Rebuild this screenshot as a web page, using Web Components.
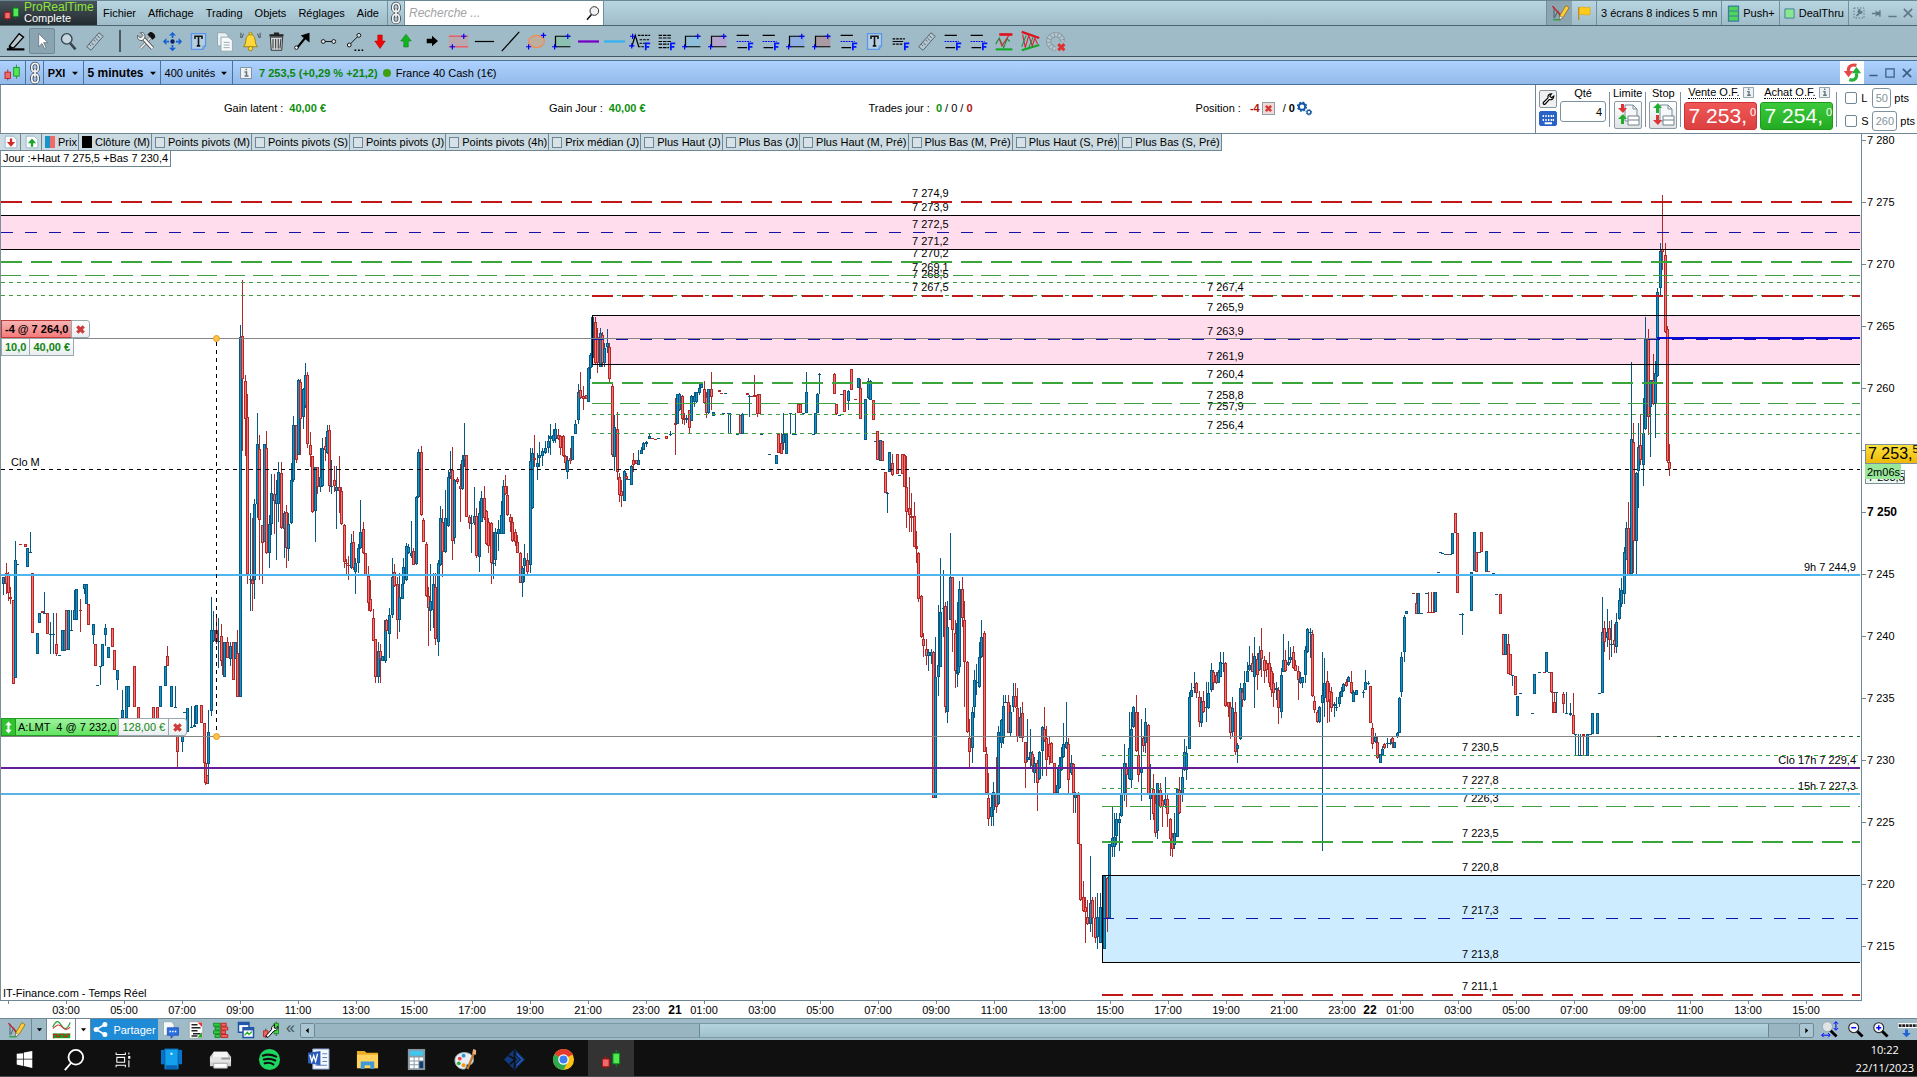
<!DOCTYPE html>
<html lang="fr">
<head>
<meta charset="utf-8">
<title>ProRealTime Complete</title>
<style>
html,body{margin:0;height:100%}
body{font:11px/14px "Liberation Sans",Arial,sans-serif;color:#000;background:#fff;overflow:hidden}
</style>
</head>
<body>
<trading-app></trading-app>
<script>
const define = (name, css, html, setup) => customElements.define(name, class extends HTMLElement {
  constructor() {
    super();
    this.attachShadow({mode: 'open'});
  }
  connectedCallback() {
    const body = typeof html === 'function' ? html(this) : html;
    this.shadowRoot.innerHTML = `<style>*{box-sizing:border-box}button{font:inherit;color:inherit;margin:0;padding:0;border:0;background:none;line-height:inherit}${css}</style>${body}`;
    if (setup) setup(this);
  }
});

/* ---------- icons, all on a 24 x 24 grid ---------- */
const plus = (x, y) => `<path d="M${x - 3} ${y}h6M${x} ${y - 3}v6" stroke="#00f" stroke-width="1.4"/>`;
const bigF = (x = 17, y = 13) => `<path d="M${x} ${y}v9M${x} ${y + 1}h5M${x} ${y + 5}h4" stroke="#0018ff" stroke-width="2" fill="none"/>`;
const linesF = `<path d="M3 5h14M4 19h11" stroke="#000" stroke-width="1.3"/><path d="M3 12h16" stroke="#00f" stroke-width="1.3" stroke-dasharray="2 1"/>${bigF()}`;
const rectPlus = c => `<path d="M4 6h17v12H4z" fill="${c}"/><path d="M4 18V6h17M4 18h17" stroke="#000" stroke-width="1.4" fill="none"/>${plus(18, 6)}${plus(3, 18)}`;
const ruler = `<path d="M3 18 17 2l5 4L8 22z" fill="#b4c6ce" stroke="#4b5a62"/><path d="m6 15 2 2m0-4 3 3m0-6 2 2m0-4 3 3m-1-6 3 3" stroke="#4b5a62" fill="none"/>`;
const textT = `<path d="M4 3h16v14l-3 4H4z" fill="#b5cfe0" stroke="#5b96ea" stroke-width="1.5"/><path d="M17 21v-4h3" fill="none" stroke="#5b96ea"/><path d="M8 9V6h8v3M12 6v11M10 17h4" stroke="#111" stroke-width="1.8" fill="none"/>`;
const pencilChart = `<path d="M4 4v15M2 3l13 14M5 18l4-9 3 8" stroke="#37474f" fill="none"/><path d="m2 3 12 13" stroke="#d11f2f" stroke-width="1.6"/><path d="M3 21h10" stroke="#1ba038" stroke-width="1.6"/><path d="m20 2 4 3-8 13-5 3 1-6z" fill="#ffcf3a" stroke="#8a6410"/><path d="m12 16 4 2-5 3z" fill="#fff" stroke="#555" stroke-width=".7"/>`;
const candles = `<path d="M6 8v14" stroke="#b11"/><rect x="2.5" y="11.5" width="7" height="8" fill="#ee6b6b" stroke="#b11"/><path d="M17 2v18" stroke="#0a8a1a"/><rect x="13.5" y="5.5" width="7" height="11" fill="#52e852" stroke="#0a8a1a"/>`;
const link = `<g fill="none" stroke="#3c454b" stroke-width="3.6"><rect x="8.5" y="1.5" width="7" height="9" rx="3.5"/><rect x="8.5" y="13.5" width="7" height="9" rx="3.5"/><path d="M12 7v10"/></g><g fill="none" stroke="#f4f4f4" stroke-width="1.8"><rect x="8.5" y="1.5" width="7" height="9" rx="3.5"/><rect x="8.5" y="13.5" width="7" height="9" rx="3.5"/><path d="M12 7v10"/></g>`;
const cross = `<path d="m5 5 14 14M19 5 5 19" stroke="#cf3b3b" stroke-width="7"/>`;
const mag = inner => `<path d="m14 14 8 8" stroke="#000" stroke-width="4"/><circle cx="9.5" cy="9.5" r="7" fill="#f3f6f8" stroke="#222" stroke-width="1.5"/>${inner}`;

const ICONS = {
  pen: `<path d="M1 21h20" stroke="#000" stroke-width="2.5"/><path d="M4 17 15 3l5 4L9 19l-5 1z" fill="#b9c9d0" stroke="#000" stroke-width="1.6"/><path d="m4 16 4 3-4 2z" fill="#000"/>`,
  cursor: `<path d="M8 3v16l4-4 3 6 2-1-3-6h5z" fill="#fff" stroke="#65727a"/>`,
  zoom: `<path d="m14 14 6 7" stroke="#37454d" stroke-width="3"/><circle cx="10" cy="9" r="6" fill="#c5d6de" stroke="#37454d" stroke-width="1.6"/>`,
  ruler, sep: `<path d="M12 0v24" stroke="#1b2327" stroke-width="1.4"/>`,
  tools: `<path d="m5 20 13-14" stroke="#777" stroke-width="3.4"/><path d="m5 20 13-14" stroke="#eee" stroke-width="1.6"/><path d="m7 7 12 13" stroke="#444" stroke-width="4.6"/><path d="m8 8 11 12" stroke="#f6f6f6" stroke-width="2.8"/><path d="m2 5 3 3 3-3-3-3c4-1 6 2 5 6L7 11C3 11 1 9 2 5z" fill="#f3f3f3" stroke="#444"/><path d="m13 4 3-3c4 0 6 3 6 6l-3 3z" fill="#111"/>`,
  move: `<circle cx="12" cy="12" r="2.5" fill="#0a1f66"/><path d="m12 1 4 4H8zM12 23l4-4H8zM1 12l4-4v8zM23 12l-4-4v8z" fill="#1262d6"/><path d="M11 5h2v3h-2zM11 16h2v3h-2zM5 11h3v2H5zM16 11h3v2h-3z" fill="#1262d6"/>`,
  text: textT,
  copy: `<path d="M4 2h9l3 3v12H4z" fill="#e9eff2" stroke="#8fa2ac"/><path d="M8 7h9l4 4v12H8z" fill="#f7f9fa" stroke="#8fa2ac"/><path d="M11 13h7m-7 3h7m-7 3h7" stroke="#8fa2ac"/>`,
  bell: `<path d="M4 18c3-3 2-6 3-9 1-4 3-5 5-5s4 1 5 5c1 3 0 6 3 9z" fill="#ffd83a" stroke="#9a7a08"/><circle cx="12" cy="20" r="2.5" fill="#ffd83a" stroke="#9a7a08"/><circle cx="12" cy="3" r="1.6" fill="#ffd83a" stroke="#9a7a08"/><path d="M4 3 2 8M1 2v6M20 3l2 5M23 2v6" stroke="#333" stroke-width=".9" fill="none"/>`,
  trash: `<path d="M5 7h14l-1 15H6z" fill="#d7dadc" stroke="#222"/><path d="M4 5h16M9 3h6" stroke="#222" stroke-width="2.4"/><path d="M8 9v11m3-11v11m3-11v11m3-11-1 11" stroke="#444" stroke-width="1.3"/>`,
  arrow: `<path d="M6 19 15 8" stroke="#000" stroke-width="2.4"/><path d="M20 2v11L10 5z"/><circle cx="5" cy="19" r="2" fill="#fff" stroke="#000"/>`,
  segment: `<path d="M6 12h12" stroke="#000"/><circle cx="6" cy="12" r="2.2" fill="#dfe8ec" stroke="#000"/><circle cx="18" cy="12" r="2.2" fill="#dfe8ec" stroke="#000"/>`,
  segdots: `<path d="M6 16 17 5" stroke="#000"/><circle cx="6" cy="16" r="2.2" fill="#dfe8ec" stroke="#000"/><circle cx="17" cy="5" r="2.2" fill="#dfe8ec" stroke="#000"/><path d="M12 22h11" stroke="#000" stroke-width="1.6" stroke-dasharray="2 2"/>`,
  down: `<path d="M9 4h6v8h4l-7 10-7-10h4z" fill="#f00505" stroke="#b50000" stroke-width=".7"/>`,
  up: `<path d="M9 20h6v-8h4L12 3 5 12h4z" fill="#12b41c" stroke="#0b7a12" stroke-width=".7"/>`,
  right: `<path d="M5 9h7V5l8 7-8 7v-4H5z"/>`,
  channel: `<path d="M1 5h22v14H1z" fill="#b9a9b0"/><path d="M1 6h22M1 18h22" stroke="#e3626e" stroke-width="1.6"/>${plus(18, 6)}${plus(5, 18)}`,
  hline: `<path d="M1 12h22" stroke="#000" stroke-width="1.4"/>`,
  diag: `<path d="M2 23 22 1" stroke="#000" stroke-width="1.4"/>`,
  ellipse: `<ellipse cx="12" cy="12" rx="9" ry="7" fill="#bfae9e" stroke="#f08a55" stroke-width="1.4"/>${plus(20, 5)}${plus(3, 18)}`,
  rectG: rectPlus('#8cc0b0'), purple: `<path d="M0 12h24" stroke="#7300c4" stroke-width="2.6"/>`, sky: `<path d="M0 12h24" stroke="#35b0f0" stroke-width="2.6"/>`,
  fork: `<path d="m2 18 4-13 4 13" stroke="#000" fill="none" stroke-width="1.4"/><path d="M9 5h14M11 10h12M11 14h8M9 18h8" stroke="#000" stroke-width="1.4" stroke-dasharray="3 1"/>${plus(3, 6)}${plus(2, 17)}${bigF(18)}`,
  dense: `<path d="M3 5h14M3 8h14M3 12h14M3 15h12M3 19h12" stroke="#000" stroke-width="1.3" stroke-dasharray="4 1"/>${bigF()}`,
  rectB: rectPlus('#8fc0da'), rectP: rectPlus('#b4a5cf'), rectV: rectPlus('#8daee0'), rectR: rectPlus('#a99aa4'), linesF,
  smallF: `<path d="M3 9h14M3 15h12" stroke="#000" stroke-width="1.3" stroke-dasharray="3 1"/><path d="M3 12h12" stroke="#000" stroke-width="1.2"/>${bigF(17, 13)}`,
  zigzag: `<path d="M6 4h15" stroke="#e00f1c" stroke-width="3"/><path d="M2 21h19" stroke="#11aa26" stroke-width="2.4"/><path d="m2 15 4-7 5 11 4-10 3 3" stroke="#12963a" fill="none" stroke-width="1.3"/><path d="m6 9 3 8 8-12" stroke="#d23" fill="none" stroke-width="1.2"/>`,
  wedge: `<path d="m2 1 20 7" stroke="#e00f1c" stroke-width="2.6"/><path d="m2 22 20-6" stroke="#11aa26" stroke-width="2.6"/><path d="m3 4 3 15 4-14 4 12 3-9 3 7" stroke="#d23" fill="none" stroke-width="1.3"/><path d="m2 18 5-13m3 14 5-12" stroke="#12963a" stroke-width="1.2"/>`,
  magnet: `<path d="M11 20a8 8 0 1 1 8-8" fill="none" stroke="#84969f" stroke-width="6"/><path d="M11 20a8 8 0 1 1 8-8" fill="none" stroke="#b4c6ce" stroke-width="4" stroke-dasharray="3 1"/><path d="m14 15 7 7m0-7-7 7" stroke="#e03030" stroke-width="3.4"/>`,
  link, candles, cross, pencilChart,
  search: `<path d="M10 14 3 22" stroke="#111" stroke-width="2.4"/><circle cx="14" cy="9" r="6.5" fill="#f2f2f2" stroke="#333" stroke-width="1.5"/>`,
  flag: `<path d="M4 3v20" stroke="#b98b32" stroke-width="2"/><path d="M5 4c5-3 8 2 16-1v11c-8 3-11-2-16 1z" fill="#ffcb1a" stroke="#e0a400"/>`,
  push: `<path d="M4 0h16v24H4z" fill="#4fd45c" stroke="#3c7c9c" stroke-width="2"/><path d="M4 8h16M4 16h16" stroke="#3c7c9c" stroke-width="1.6"/>`,
  deal: `<path d="M2 2h20v20H2z" fill="#8ae790" stroke="#3c7c9c" stroke-width="2"/>`,
  dotwrench: `<path d="M2 2h20v20H2z" fill="none" stroke="#61788a" stroke-width="2" stroke-dasharray="3 3"/><path d="m7 18 8-8" stroke="#61788a" stroke-width="3.4"/><path d="M19 8a5 5 0 1 1-4-4v4z" fill="#61788a"/>`,
  pin: `<path d="M2 12h9" stroke="#61788a" stroke-width="3"/><path d="M10 5v14l3-3h5v3h3V5h-3v3h-5z" fill="#61788a"/>`,
  min: `<path d="M1 20h22" stroke="currentColor" stroke-width="4"/>`,
  max: `<path d="M2 2h20v20H2z" fill="none" stroke="currentColor" stroke-width="3"/>`,
  close: `<path d="m2 2 20 20M22 2 2 22" stroke="currentColor" stroke-width="4"/>`,
  sync: `<path d="M17 3C9 1 6 6 7 11" fill="none" stroke="#e54848" stroke-width="4"/><path d="M1 10h12l-6 8z" fill="#e54848"/><path d="M8 21c7 2 10-2 9-8" fill="none" stroke="#25b236" stroke-width="4"/><path d="M11 13h12l-6-8z" fill="#25b236"/>`,
  info: `<path d="M1 1h22v22H1z" fill="#eef2f5" stroke="#6f8390" stroke-width="1.6"/><path d="M9 10h4v8M9 18h8M11 5h3" stroke="#63757f" stroke-width="3" fill="none"/>`,
  wrench: `<path d="M4 18 12 10c-1-4 2-7 6-7l-3 4 3 3 4-3c0 5-4 7-8 6l-7 8c-2 1-4-1-3-3z" fill="#fff" stroke="#000" stroke-width="2"/>`,
  keyboard: `<path d="M4 6h2v3H4zm4 0h2v3H8zm4 0h2v3h-2zm4 0h2v3h-2zm-12 6h2v3H4zm4 0h2v3H8zm4 0h2v3h-2zm4 0h2v3h-2zm3-6h2v3h-2zm0 6h2v3h-2zM7 17h11v3H7z" fill="#fff"/>`,
  limite: `<path d="M9 2h8l4 4v12H9z" fill="#f5f7f8" stroke="#7b8d98"/><path d="M17 2v4h4" fill="none" stroke="#7b8d98"/><path d="M12 13h11v9H12z" fill="#fff" stroke="#6f838e"/><path d="M12 17h11" stroke="#6f838e"/><path d="M5 1h3v4h3l-4 5-5-5h3z" fill="#e03434"/><path d="M5 21h3v-5h3l-4-5-5 5h3z" fill="#1fae2c"/>`,
  stop: `<path d="M9 2h8l4 4v12H9z" fill="#f5f7f8" stroke="#7b8d98"/><path d="M17 2v4h4" fill="none" stroke="#7b8d98"/><path d="M12 13h11v9H12z" fill="#fff" stroke="#6f838e"/><path d="M12 17h11" stroke="#6f838e"/><path d="M5 10h3V5h3L7 0 2 5h3z" fill="#1fae2c"/><path d="M5 12h3v5h3l-4 5-5-5h3z" fill="#e03434"/>`,
  pageDown: `<path d="M2 2h14l6 6v14H2z" fill="#fff" stroke="#92b2cc" stroke-width="1.5"/><path d="M10 6h4v6h5l-7 8-7-8h5z" fill="#d22a2a"/>`,
  pageUp: `<path d="M2 2h14l6 6v14H2z" fill="#fff" stroke="#92b2cc" stroke-width="1.5"/><path d="M10 20h4v-6h5l-7-8-7 8h5z" fill="#17a52a"/>`,
  gears: `<circle cx="8" cy="9" r="5" fill="none" stroke="#1656a5" stroke-width="3"/><circle cx="8" cy="9" r="7" fill="none" stroke="#1656a5" stroke-width="2.4" stroke-dasharray="3 2.5"/><circle cx="19" cy="18" r="3" fill="none" stroke="#1656a5" stroke-width="2"/><circle cx="19" cy="18" r="4.4" fill="none" stroke="#1656a5" stroke-width="1.6" stroke-dasharray="2 1.5"/>`,
  caret: `<path d="M3 8h18l-9 10z"/>`,
  updown: `<path d="m12 1 6 7h-4v8h4l-6 7-6-7h4V8H6z" fill="#fff"/>`,
  wave: `<path d="M1 9c4-9 7-9 11-2s8 4 11-4" stroke="#22a53a" stroke-width="1.6" fill="none"/><path d="M1 11c6-6 9-6 13-1 3 3 6 2 9-1" stroke="#d33" stroke-width="1.4" fill="none"/><path d="M1 17h22v6H1z" fill="#0aa51d"/><path d="M2 23v-5h4v3h4v-3h5v3h4v-3h4" stroke="#c22" stroke-width="1.4" fill="none"/>`,
  share: `<path d="M19 4 5 12l14 8" stroke="#fff" stroke-width="2.4" fill="none"/><circle cx="19" cy="4" r="4" fill="#fff"/><circle cx="5" cy="12" r="4" fill="#fff"/><circle cx="19" cy="20" r="4" fill="#fff"/>`,
  chat: `<path d="M2 1h11l3 4v14H2z" fill="#f7f9fa" stroke="#8aa"/><path d="M7 9h15v10h-6l-4 4v-4H7z" fill="#2c6fe0" stroke="#1b4fae"/><path d="M10 14h9" stroke="#fff" stroke-width="2" stroke-dasharray="2 1.5"/>`,
  sheet: `<path d="M3 1h18v22H3z" fill="#fff" stroke="#999"/><path d="M6 5h8M6 9h12M6 13h8m-6 4h10M6 20h8" stroke="#222" stroke-width="2"/><path d="M14 2h6v6z" fill="#d33"/><path d="m14 22 6-7v7z" fill="#2a2"/>`,
  book: `<path d="M2 3h9v4H2zm2 5h7v4H4zM2 13h9v4H2zm2 5h7v4H4z" fill="#2fcb42" stroke="#0b7a1b"/><path d="M12 3h7v4h-7zm0 5h9v4h-9zm0 5h6v4h-6zm0 5h9v4h-9z" fill="#f06262" stroke="#b11"/>`,
  windows2: `<path d="M2 2h14v13H2z" fill="#fff" stroke="#1f55a8" stroke-width="2"/><path d="M2 4h14" stroke="#1f55a8" stroke-width="3"/><path d="M8 9h14v13H8z" fill="#fff" stroke="#1f55a8" stroke-width="2"/><path d="M8 11h14" stroke="#1f55a8" stroke-width="3"/><path d="m10 19 4-4 2 3 4-4" stroke="#2a2" fill="none" stroke-width="1.5"/>`,
  candleWrench: `<path d="M5 10v13M19 1v19" stroke="#333"/><path d="M2 13h6v8H2z" fill="#f06262" stroke="#b11"/><path d="M16 3h6v14h-6z" fill="#43d943" stroke="#0a7a1a"/><path d="m5 20 8-9c-1-3 1-5 4-6l-1 4 3 1 2-3c1 4-2 6-5 6l-8 9z" fill="#fff" stroke="#000" stroke-width="1.3"/>`,
  zoomFit: `<path d="m13 13 9 9" stroke="#000" stroke-width="4"/><circle cx="9" cy="8" r="7" fill="#dfe4e7" stroke="#8b979e"/><path d="M21 1v11M1 20h11" stroke="#00f" stroke-width="1.4"/><path d="m18 4 3-3 3 3m-6 6 3 3 3-3M4 17l-3 3 3 3m6-6 3 3-3 3" stroke="#00f" fill="none" stroke-width="1.4"/>`,
  zoomOut: mag('<path d="M6 9.5h7" stroke="#00f" stroke-width="2"/>'),
  zoomIn: mag('<path d="M6 9.5h7M9.5 6v7" stroke="#00f" stroke-width="2"/>'),
  dock: `<path d="M0 3h28v7H0z" fill="#fff"/><path d="M1 6.5h26" stroke="#222" stroke-width="4" stroke-dasharray="4 1"/><path d="M10 12h4v5h4l-6 6-6-6h4z" fill="#1f63d6"/>`,
  win: `<path d="m1 4 9-1v8H1zm10-2 12-2v11H11zM1 12h9v9l-9-2zm10 0h12v12l-12-3z" fill="#fff"/>`,
  tsearch: `<circle cx="14" cy="9" r="8" fill="none" stroke="#fff" stroke-width="2"/><path d="m9 15-7 8" stroke="#fff" stroke-width="2"/>`,
  tasks: `<path d="M4 9h11v7H4zM3 2v3h13V2M3 23v-3h13v3M21 2v3M21 13v10" stroke="#fff" stroke-width="1.5" fill="none"/><path d="M20 7h3v4h-3z" fill="#fff"/>`,
  phone: `<path d="M1 2h22v15H1z" fill="#0a72c9"/><path d="M5 1h14v21H5z" fill="#12a1ea" stroke="#0a5ea8"/><path d="M11 6h2" stroke="#fff" stroke-width="2"/><path d="M6 18h12v4H6z" fill="#0b63b4"/>`,
  printer: `<path d="M5 4h14l4 5v10H1V9z" fill="#cfcfcf"/><path d="M5 4h14l1 6H4z" fill="#f5f5f5"/><path d="M1 10h22v5H1z" fill="#e4e4e4"/><path d="M13 11h9" stroke="#999" stroke-width="2"/><path d="M5 16h14v5H5z" fill="#fff" stroke="#aaa"/>`,
  spotify: `<circle cx="12" cy="12" r="11" fill="#1ed760"/><path d="M5 8c5-2 10-1 14 1M6 12c4-1 8-1 12 1M7 16c3-1 6-1 9 1" stroke="#111" stroke-width="2.2" fill="none" stroke-linecap="round"/>`,
  word: `<path d="M6 1h17v21H6z" fill="#f4f7fc" stroke="#7d97c9"/><path d="M16 6h5m-5 4h5m-5 4h5M9 18h12" stroke="#5b79b8"/><path d="m1 5 13-2v15L1 16z" fill="#2b5bb8"/><path d="m3 7 2 7 2-6 2 6 2-8" stroke="#fff" stroke-width="1.4" fill="none"/>`,
  folder: `<path d="M1 3h8l2 2h12v16H1z" fill="#e9ae26"/><path d="M1 7h22v14H1z" fill="#ffd35c"/><path d="M5 22v-8h14v8h-4v-4H9v4z" fill="#3b98db"/>`,
  calc: `<path d="M3 1h18v22H3z" fill="#8a98a4"/><path d="M5 3h14v5H5z" fill="#3fc5ee"/><path d="M5 10h4v3H5zm5 0h4v3h-4zm5 0h4v3h-4zM5 14h4v3H5zm5 0h4v3h-4zM5 18h4v3H5zm5 0h4v3h-4z" fill="#fff"/><path d="M15 14h4v7h-4z" fill="#143f74"/>`,
  paint: `<path d="M1 13c0-6 6-9 12-8s8 5 7 9-4 3-6 3 0 5-4 5-9-3-9-9z" fill="#e8eef3" stroke="#9bb"/><circle cx="6" cy="11" r="2" fill="#e44"/><circle cx="10" cy="8" r="2" fill="#39c"/><circle cx="5" cy="16" r="2" fill="#3a4"/><circle cx="10" cy="18" r="2" fill="#e91"/><path d="M14 22 21 5" stroke="#c07a2a" stroke-width="2.4"/><path d="m19 6 1-5 3 1v5z" fill="#e8b27a"/>`,
  diamond: `<path d="m12 1 11 11-11 11L1 12z" fill="#12397e"/><path d="M12 2v20M6 8l7 4-6 5m6-11 6 6-6 6" stroke="#101010" stroke-width="1.8" fill="none"/><path d="m14 6 6 6-6 6" stroke="#2462c4" stroke-width="1.5" fill="none"/>`,
  chrome: `<circle cx="12" cy="12" r="11" fill="#fbc116"/><path d="M12 12 2.5 6.5A11 11 0 0 1 21.5 6.5z" fill="#e33b2e"/><path d="M12 12 2.5 6.5A11 11 0 0 0 12 23l4-8z" fill="#2da94f"/><path d="M12 6.5h9.5" stroke="#e33b2e" stroke-width="2"/><circle cx="12" cy="12" r="5.5" fill="#fff"/><circle cx="12" cy="12" r="4.2" fill="#3f7ff0"/>`
};
define('ui-icon', `:host{display:inline-block;flex:none;line-height:0}svg{display:block;width:var(--s);height:var(--s);overflow:visible}`,
  el => `<svg viewBox="0 0 24 24" style="--s:${el.getAttribute('size') || 20}px" aria-hidden="true">${ICONS[el.getAttribute('name')] || ''}</svg>`);
const icon = (n, s) => `<ui-icon name="${n}" size="${s}"></ui-icon>`;

/* ---------- menu bar ---------- */
define('menu-bar', `
:host{display:flex;height:25px;background:linear-gradient(#b8d6e2,#9fbcc8);border-top:1px solid #6c8794;flex:none}
.logo{display:flex;align-items:center;gap:3px;width:97px;padding-left:3px;background:linear-gradient(#47535a,#222b30);color:#fff;line-height:11px}
.logo b{display:block;font-weight:400;font-size:12px;color:#8ee63a}
nav{display:flex;gap:12px;padding:0 6px;align-items:center;width:290px}
.link{display:flex;align-items:center;border:solid #71909e;border-width:0 1px;width:18px;justify-content:center}
form{display:flex;width:199px;background:#fff;align-items:center;padding:0 2px;border-right:1px solid #71909e;margin:0}
input{flex:1;min-width:0;border:0;outline:0;font:italic 12px "Liberation Sans",sans-serif;background:none}
input::placeholder{color:#a3a3a3;opacity:1}
.sp{flex:1}
.c{display:flex;align-items:center;gap:2px;padding:0 4px;border-right:1px solid #71909e}
.g{gap:4px}
.on{background:#8ba5b1;border-left:1px solid #71909e;border-right:0;width:26px;padding:0;justify-content:center}
.ctl{display:flex;align-items:center;gap:6px;padding:0 4px;color:#61788a}`,
`<div class="logo">${icon('candles', 18)}<span><b>ProRealTime</b>Complete</span></div>
<nav><button>Fichier</button><button>Affichage</button><button>Trading</button><button>Objets</button><button>Réglages</button><button>Aide</button></nav>
<button class="link" aria-label="Lier">${icon('link', 22)}</button>
<form><input type="text" aria-label="Recherche" placeholder="Recherche ...">${icon('search', 16)}</form>
<span class="sp"></span>
<button class="c on" aria-label="Dessin">${icon('pencilChart', 18)}</button><button class="c" aria-label="Drapeau">${icon('flag', 16)}</button>
<button class="c">3 écrans 8 indices 5 mn</button><button class="c">${icon('push', 15)}Push+</button><button class="c g">${icon('deal', 11)}DealThru</button>
<span class="ctl">${icon('dotwrench', 12)}${icon('pin', 11)}${icon('min', 9)}${icon('close', 10)}</span>`);

/* ---------- drawing tools ---------- */
const TOOLS = 'pen cursor zoom ruler sep tools move text copy bell trash arrow segment segdots down up right channel hline diag ellipse rectG purple sky fork dense rectB rectP linesF linesF rectV rectR linesF text smallF ruler linesF linesF zigzag wedge magnet'.split(' ');
define('tool-bar', `
:host{display:flex;height:35px;flex:none;padding:0 3px 3px;align-items:center;background:linear-gradient(#4e6570 0 1px,#9ebbc7 1px 31px,#3f5864 31px 32px,#b9ccd5 32px)}
button,span{display:flex;width:26px;height:26px;align-items:center;justify-content:center;flex:none}
.on{background:#8aa5b1;border:1px solid #6f8a96;border-radius:2px}`,
TOOLS.map((t, i) => t === 'sep' ? `<span>${icon(t, 22)}</span>` : `<button class="${i === 1 ? 'on' : ''}" aria-label="Outil ${i}">${icon(t, [14, 15, 16].includes(i) ? 18 : i === 1 ? 20 : 21)}</button>`).join(''));

/* ---------- chart window title ---------- */
define('chart-title', `
:host{display:flex;height:25px;flex:none;border:solid #4b7399;border-width:1px 0;background:linear-gradient(#aed2ff,#93bae9)}
button,.c{display:flex;align-items:center;justify-content:center;border-right:1px solid #4b7399}
.k{width:26px}.l{width:18px}.s{width:40px;gap:6px;font-weight:700}.t{width:77px;gap:5px;font-weight:700;font-size:12px}.u{width:72px;gap:5px}
.q{flex:1;display:flex;align-items:center;gap:7px;padding-left:7px}
.q b{color:#0a870a}.dot{width:8px;height:8px;border-radius:50%;background:#3f9f12;margin:0 -2px}
.sync{width:24px;background:#fff;border:0}
.ctl{display:flex;align-items:center;gap:7px;padding:0 5px;color:#3c5f85}`,
`<button class="k" aria-label="Graphique">${icon('candles', 19)}</button><button class="l" aria-label="Lier">${icon('link', 22)}</button>
<button class="s">PXI${icon('caret', 8)}</button><button class="t">5 minutes${icon('caret', 8)}</button><button class="u">400 unités${icon('caret', 8)}</button>
<div class="q">${icon('info', 12)}<b>7 253,5 (+0,29 % +21,2)</b><span class="dot"></span><span>France 40 Cash (1€)</span></div>
<button class="sync" aria-label="Synchroniser">${icon('sync', 19)}</button><span class="ctl">${icon('min', 9)}${icon('max', 10)}${icon('close', 10)}</span>`);

/* ---------- account figures and order entry ---------- */
define('stats-row', `
:host{display:flex;flex:1;min-width:0;justify-content:space-evenly;align-items:center;background:#fff;padding-bottom:2px;border-left:1px solid #7c8f9a}
div{display:flex;align-items:center;white-space:pre}
b{color:#0f900f}b.r{color:#b01414}b.k{color:#000;margin-right:2px}.v{margin-left:6px}
.x{display:flex;border:1px solid #8fa0a9;margin:0 8px 0 2px;padding:1px;background:#f3d8d8}`,
`<div>Gain latent :<b class="v">40,00 €</b></div><div>Gain Jour :<b class="v">40,00 €</b></div>
<div>Trades jour :<b class="v">0</b> / 0 / <b class="r">0</b></div>
<div>Position : <b class="r v">-4</b><button class="x" aria-label="Fermer la position">${icon('cross', 9)}</button>/ <b class="k">0</b>${icon('gears', 15)}</div>`);

define('order-panel', `
:host{display:flex;flex:none;width:382px;height:100%;border-left:1px solid #6f8794;padding:1px 0 0 3px;gap:3px;background:#fff}
.col{display:flex;flex-direction:column;align-items:center;gap:2px}
.col label,.h{height:13px;display:flex;align-items:center;gap:3px}
.sq{width:18px;height:18px;border:1px solid #8394a0;border-radius:2px;background:#f0f0f0;display:flex;align-items:center;justify-content:center}
.kb{background:#2a63c8;border-color:#2a63c8;height:15px}
.tools{gap:3px;padding-top:4px}
input[type=text]{border:1px solid #7d919e;border-radius:3px;font:11px "Liberation Sans",sans-serif;text-align:right;padding:0 3px;background:#fff}
.q{width:46px;height:21px}
.pg{width:28px;height:28px;border:1px solid #8c9ba4;border-radius:2px;background:linear-gradient(#fff,#dfe3e6);display:flex;align-items:center;justify-content:center}
i.s{width:1px;background:#7e909a;margin:6px 0 6px}
u{text-decoration:none;border-bottom:1px dotted #000;line-height:12px;white-space:nowrap}
.px{width:73px;height:28px;border-radius:3px;color:#fff;font-size:21px;display:flex;justify-content:center;padding-left:3px;line-height:26px;white-space:pre}
.px sup{font-size:11px;line-height:18px;margin-left:3px}
.sell,.buy{margin-top:1px}
.sell{background:linear-gradient(#ef5757,#dc4040);border:1px solid #c33}.buy{background:linear-gradient(#3cc93c,#23ac23);border:1px solid #1d9a1d}
.ls{display:flex;flex-direction:column;gap:3px;padding:2px 0 0 5px}
.ls div{display:flex;align-items:center;gap:3px;height:20px}
.ls label{display:flex;align-items:center;gap:4px;width:24px}
.ls input[type=checkbox]{appearance:none;width:12px;height:12px;border:1px solid #6f8794;border-radius:2px;margin:0;background:#fff}
.ls input[type=text]{height:20px;color:#83929b;text-align:center;padding:0}
.a{width:19px}.b{width:25px}`,
`<div class="col tools"><button class="sq" aria-label="Réglages">${icon('wrench', 14)}</button><button class="sq kb" aria-label="Clavier">${icon('keyboard', 16)}</button></div>
<div class="col"><label for="q">Qté</label><input id="q" class="q" type="text" value="4"></div><i class="s"></i>
<div class="col"><span class="h">Limite</span><button class="pg" aria-label="Limite">${icon('limite', 24)}</button></div><i class="s"></i>
<div class="col"><span class="h">Stop</span><button class="pg" aria-label="Stop">${icon('stop', 24)}</button></div><i class="s"></i>
<div class="col"><span class="h"><u>Vente O.F.</u>${icon('info', 11)}</span><button class="px sell">7 253,<sup>0</sup></button></div>
<div class="col"><span class="h"><u>Achat O.F.</u>${icon('info', 11)}</span><button class="px buy">7 254,<sup>0</sup></button></div><i class="s"></i>
<div class="ls"><div><label><input type="checkbox">L</label><input class="a" type="text" value="50" aria-label="Limite en points">pts</div>
<div><label><input type="checkbox">S</label><input class="b" type="text" value="260" aria-label="Stop en points">pts</div></div>`);

/* ---------- indicator legend ---------- */
const LEGEND = ['Points pivots (M)', 'Points pivots (S)', 'Points pivots (J)', 'Points pivots (4h)', 'Prix médian (J)', 'Plus Haut (J)', 'Plus Bas (J)', 'Plus Haut (M, Pré)', 'Plus Bas (M, Pré)', 'Plus Haut (S, Pré)', 'Plus Bas (S, Pré)'];
define('legend-bar', `
:host{display:flex;height:18px;min-width:0;border:solid #6f8794;border-width:1px 1px 0 0;background:#fff}
button,label{display:flex;align-items:center;gap:3px;padding:0 1px 0 3px;background:#ccdbe1;border:solid #6f8794;border-width:0 1px 1px 0;white-space:nowrap;flex:none}
.i{width:21px;justify-content:center}
i{width:10px;height:12px;background:linear-gradient(90deg,#1695c8 50%,#f06a6a 50%)}i.k{background:#000}
input{appearance:none;margin:0;width:10px;height:11px;border:1px solid #6f8794;background:#d6e2e7}`,
`<button class="i" aria-label="Descendre">${icon('pageDown', 14)}</button><button class="i" aria-label="Monter">${icon('pageUp', 14)}</button>
<button><i></i>Prix</button><button><i class="k"></i>Clôture (M)</button>` + LEGEND.map(t => `<label><input type="checkbox">${t}</label>`).join(''));

/* ---------- candles ----------
   Each block: origin x, origin y, scale x, scale y, then bars as
   direction, x, high, body top, body bottom, low. Two values after the
   x (or one) stand for a bar without wicks (or a flat tick). */
const BLOCKS = [
[0, 260, 2.45, 2.904, `u8 920 922 940 972,d16 880 910 940 970,d20 905 912 968 990,d25 950 980 985 998,d34 988 1230,u38 815 872 1215 1215,u44 882,d50 825,d62 824 834,u68 835 892,u75 790 849 849 849,d80 908 1083,u92 1083 1145,u97 1025 1055,d105 1020 1025,u109 963 1024 1024 1024,d117 1025 1085,u123 1050 1085 1086 1145,u130 1025 1085 1086 1145,d138 1025 1115 1145 1150,u145 1147,u152 1075 1136,u158 1075 1135,d164 1017 1134,u168 1017 1134,u176 1017 1075 1075 1075,u182 958 1017 1045 1045,u188 955 1045,d196 985 1015 1016 1080,u206 941 941 955 970,u211 941 1000,d216 1000 1060,u228 1058 1058 1090 1115,d234 1115 1178,u240 1235,u246 1178 1178 1178 1235,u251 1116 1178,u258 1058 1070 1088 1120,u267 1125 1155,d275 1070 1125,d281 1133 1190,u289 1190 1190 1220 1250,u299 1248 1308 1330 1330,u309 1238 1330,u316 1238 1297,d329 1180 1297,d339 1297 1340,d377 1298 1345,d385 1298 1340,u393 1238 1297,u405 1180 1238,d410 1120 1150 1180 1180,u421 1238 1297,u429 1238 1298 1299 1299,d435 1340 1380 1430 1472,u447 1360 1360 1400 1430,u453 1312,u460 1300 1370,u470 1295 1355 1355 1355,u476 1295 1350 1355 1355,u481 1293 1348,d493 1293 1345,d500 1345 1460,d504 1430 1460 1520 1525,d508 1495 1523,u511 1308 1370 1465 1523,u518 980 1075 1310 1325,u524 1020 1075 1105 1110,d530 1030 1075 1110 1115,u536 1040 1105 1106 1185,d542 1058 1092 1165 1180,d547 1110 1135 1205 1210,u551 1110 1212,d558 1095 1110 1155 1155,u564 1110 1122 1158 1180,d572 1110 1220,u577 1110 1160,d583 1075 1140 1268 1268,u589 190 225 1268 1268,d594 58 222 345 555,d601 335 352 462 570,d606 390 455 912 940,u613 735 925 930 1020,d618 750 930 942 1020,u624 695 708 930 985,u631 445 535 708 750,d636 508 550 755 930,d642 770 770 822 940,u648 535 820,d653 497 545 852 855,u660 740 768 852 895,u665 622 678 768 800,d672 622 680 700 795,u677 640 680 710 870,u683 588 615 708 760,d690 588 618 778 780,u696 730 735 780 865,d702 712 732 835 895,u708 735 768 838 875,u714 590 638 765 768,u720 452 480 640 645,d726 480 480 580 590,u731 345 348 565 565,d737 345 355 462 565,u743 372 375 455 490,u749 298 335 425 430,d754 325 335 535 545,d760 500 538 565 600,d766 568 570 732 735,u773 600 600 728 820,d779 600 600 660 680,u785 545 630 660 675,u791 518 545 655 660,d797 515 540 552 585,u802 480 498 560 562,d807 478 495 655 675,u813 580 655 660 680,d819 598 640 655 675,u824 598 660 670 780,d831 568 660 672 735,d836 660 672 768 770,d843 768 770 878 895,d849 868 880 882 915,d855 860 885 890 930,u861 795 822 895 898,d866 788 818 895 900,u872 865 880 905 970,u878 825 835 880 910,u884 697 790 835 840,d890 760 780 850 855,d896 850 852 915 918,d902 890 918 995 1020,d908 930 985 1020 1022,d914 1013 1040 1105 1105,d920 1100 1102 1210 1227,u927 1110 1135 1210 1227,d932 1115 1135 1160 1227,u938 1150 1165,u944 1045 1045 1165 1170,d948 1042 1045 1078 1080,u955 1010 1030 1085 1155,u961 865 922 1030 1040,d967 882 905 948 950,d974 920 940 1045 1102,u979 910 978 1045 1080,u985 940 985,u989 865 892 940 942,u995 822 830 930 932,u1002 825 832 850 855,u1008 757 850 860 865,d1013 835 845 885 885,u1020 685 688 882 885,u1026 550 558 688 690,d1032 540 558 740 742,d1038 750 755 818 820,d1044 820 825 975 978,d1049 950 975 1010 1120,u1055 882 990 1020 1078,u1061 910 940 1015 1070,d1067 910 950 1102 1118,u1074 870 880 1110 1150,u1079 715 748 885 888,d1085 722 760 848 920,u1091 668 748 848 850,u1098 610 630 772 775,u1103 555 615 630 635,d1108 542 610 815 870,u1114 635 640 808 825,d1120 630 635 645 650,d1128 592 655 665 760,u1133 565 580 665 668,u1138 472 565 580 600,d1144 565 745,d1150 740 745 765 780,u1156 740 763 765 850,u1162 660 742 765 770,d1168 720 742 860 865,u1174 700 735 862 905,u1180 670 690 760 760,d1186 655 690 750 755,d1191 725 730 825 828,d1197 750 762 830 850,d1203 760 765 880 942,u1209 790 880 882 925,u1215 778 790 870 890,u1222 755 780 795 845,u1228 700 740 795 795,u1234 640 655 795 795,d1238 625 655 680 682,d1244 655 682 740 742,d1250 738 745 760 790,d1256 745 760 815 820,d1263 780 790 820 830,d1269 800 820 850 852,d1275 848 850 937 937,u1280 890 895 937 980,u1286 825 865 890 935,d1292 852 870 905 915,u1299 545 585 885 910,u1304 545 560 720 722,d1310 508 575 580 600,u1316 560 590 600 640,u1322 528 565 575 600,u1330 545 555 570 598,u1337 525 545 560 562,u1343 508 525 545 560,u1349 475 510 520 565,u1356 490 508 525 530,u1362 472 490 520 530,d1368 490 508 520 522,d1374 508 510 545 565,d1380 508 510 570 572,d1386 565 570 590 610,u1391 570 580 615 635,d1397 545 575 585 592,u1403 510 512 580 580,u1411 465 475 505 505,u1417 360 382 465 475,d1422 325 378 400 405,d1430 365 395 405 435,d1436 392 405,u1441 312 315 412 412,u1447 270 275 315 345`],
[560, 260, 3, 3, `u97 165 172 295 322,d105 172 185 310 312,d112 205 230 310 340,u122 205 220 322 322,d127 215 225 310 320,u133 250 265 310 322,u142 207 248 260 280,d149 250 260 358 370,d158 370 377 585 592,u163 465 500 590 632,d172 455 508 637 660,d179 640 650 705 725,d184 660 693 708 740,u193 630 632 723 723,d199 640 647 657 660,u206 657 660,u213 615 617 676 676,d220 580 600 615 635,d228 600 612,u236 570 600 615 615,u244 560 570 582 582,u250 545 548 570 570,u259 543 545 553 560,u267 518 527 537 538,d278 535,d286 537,u296 533,d319 527 538,u331 513 523 525 527,d347 415 490 495 585,u352 402 492,u357 398 402 450 452,d367 405 407 478 492,d374 460 475 480 495,u380 465 475 480 490,d388 450 450 505 518,u394 405 407 484 484,u403 397 407 425 440,u409 395 397 425 428,u419 372 383 400 405,u425 370 372 385 385,d433 362 387 430 432,d440 395 412 460 475,u445 387 388 460 462,d454 337 387 410 450,u461 455 468,d477 391 397,d483 399,u497 400,u490 460,u505 460 460 460 522,u511 460 520 522 522,u533 523,d541 465 523,u548 460 462 522 522,u556 462,d561 398 404,u569 405 408 411 470,d578 409,d583 345 405 411 412,d592 403 405 463 470,d599 403 463,u604 522,u628 583,u650 585 613,d656 522 580,d664 520 548 582 582,u671 458 522 548 570,u679 522 583,u691 460 460 460 523,u700 523,u706 460 523 523 523,d714 432 460,d721 432 460,u730 460,u738 337 397 458 458,u751 461,u760 523,u767 458 460 523 523,u773 400 403 458 460,u778 340 341 342 403,d823 338 343 403 403,d829 432 433 463 465,u837 465,u845 403,d853 391 455,u865 391 393 423 450,d875 328 391,d885 417,u896 355 385,d902 358 385 478 478,u916 417 541,u925 355 362 415 418,u932 360 362 420 420,d940 420 481,u946 542,d952 512 601,u961 541 603,d967 544 604,d977 637 700,u982 697 698 698 760,u989 577 636,d997 582 608 645 647,d1012 583 643,u1018 645,d1027 583 643,d1033 583 584 680 680,d1040 588 680 757 803,d1048 650 743 765 815,d1055 700 768 775 815,d1063 725 767 860 860,d1069 812 858 868 870`],
[900, 460, 3, 3, `d19 78 80 157 203,d28 52 145 165 215,d34 100 168 175 215,d43 125 167 260 260,d49 212 262 268 308,d56 275 278 418 425,d64 405 407 530 535,d70 520 538 557 592,d79 538 568 588 615,u86 568 575 587 632,u93 568 575 587 612,d101 572 575 1015 1015,u107 530 650 1015 1015,u115 435 615 650 708,u121 295 455 622 622,u130 330 445 447 530,d136 425 437 742 760,u142 422 500 755 790,u151 220 352 481 481,d157 350 352 510 575,d166 480 520 632 685,u172 480 490 643 680,u175 422 425 640 645,u179 362 388 622 622,d187 352 388 475 500,d193 422 480 605 742,d202 603 605 817 820,d208 777 835 875 928,u217 742 755 865 910,u223 630 660 742 775,u229 612 665 667 705,u238 545 592 680 685,u244 480 530 592 595,d253 512 520 875 875,d259 862 883 1000 1000,d265 940 1015 1078 1097,u274 1000 1040 1070 1097,u280 965 997 1050 1097,d289 892 1000 1040 1060,u295 798 817 1033 1035,u304 777 780 850 865,u310 705 737 835 853,u316 705 725 727 730,d325 705 725 818 818,u331 735 755 818 830,u340 668 707 740 755,d346 668 707 742 745,d352 685 745 830 847,u361 740 770 835 835,d367 725 760 835 847,d376 845 847 910 985,u382 778 892 900 905,u391 807 875 900 925,d397 872 882 918 937,u403 892 910 940 968,d412 900 910 968 1052,u419 872 875 958 960,u428 797 800 873 947,d433 742 808 840 845,d439 797 835 900 947,d448 832 853 892 915,d454 847 848 910 910,d463 910 1000,u472 925 975 1000 1002,u478 892 915 985 987,u484 862 890 930 932,u490 790 852 892 895,u499 725 847 865 868,d505 835 853 960 1000,u514 885 910 940 945,d520 910 912 1000 1060,u526 995 1000 1015 1060,d535 997 1005 1153 1153,d541 1152 1153 1320 1322,d550 1262 1312 1352 1355,d557 1310 1340 1357 1450,d562 1320 1370 1393 1395,u571 1188 1330 1393 1415,d577 1312 1320 1375 1432,d586 1312 1375 1433 1450,u592 1300 1370 1432 1468,u601 1300 1340 1450 1450,u613 1247 1468,d622 1250 1255 1375 1415,u628 1152 1153 1375 1376,u637 1040 1135 1160 1190,u643 1060 1130 1160 1190,u649 1060 1077 1127 1155,u658 1060 1077 1090 1172,u664 925 1000 1068 1070,u673 853 910 1000 1022,d679 910 925 945 1040,u688 755 865 958 960,u694 755 808 960 985,u700 737 742 800 805,d709 705 755 873 875,d715 755 885 945 965,u724 778 925 940 1022,d730 828 835 857 875,u736 745 785 850 878,d745 792 795 1005 1005,u751 912 1000 1017 1080,d760 942 987 1062 1080,d766 1000 1030 1120 1130,u772 968 970 1112 1138,d782 970 990 1040 1045,d788 1000 1020 1040 1100,u796 952 1018 1035 1045,d802 1005 1018 1062 1100,d811 1075 1077 1138 1187,d817 1120 1130 1168 1192,u823 1060 1120 1155 1168,u832 985 988 1130 1130,d838 950 990 1060 1062,u847 925 952 1005 1025,u853 837 877 930 932,u858 858 878 930 960`],
[1140, 500, 3, 3, `u148 575 590 748 748,u154 548 570 590 590,u163 515 562 563 578,d169 545 550 578 595,d178 572 590 665 680,u184 590 605 670 680,d190 572 602 637 640,u199 545 622 625 665,u205 545 580 625 627,u214 488 510 570 575,d220 510 515 548 570,d229 515 525 550 552,u235 510 515 548 550,u241 455 487 530 532,u250 455 488 490 515,d256 485 488 618 620,d265 605 607 620 650,d271 605 620 700 718,u277 590 625 695 710,d286 605 637 757 765,u292 728 735 748 788,u301 548 563 717 720,d307 563 575 600 622,u313 512 550 600 602,u322 485 512 545 545,u328 437 495 510 512,d337 458 490 515 515,u343 412 468 530 625,d352 460 478 525 570,u358 437 458 510 512,d364 385 450 478 530,d373 468 480 512 548,d379 480 488 510 530,d388 455 488 548 562,d394 500 512 570 590,d400 520 548 580 620,u409 545 563 570 600,d415 560 570 625 672,u424 505 525 637 655,u430 402 480 515 517,d436 450 480 512 515,u445 422 487 495 497,u451 440 470 480 490,d460 437 457 505 507,d466 480 495 512 514,d475 498 512 540 600,u481 515 535 550 552,u487 530 532 548 565,u496 437 450 525 550,u502 385 387 457 460,u511 385 395 396 475,d517 390 402 588 590,d523 588 602 630 640,d532 630 635 667 670,u538 618 620 665 670,u547 455 585 610 1052,u553 475 548 595 650,d562 512 542 605 670,d568 548 572 600 665,d574 560 575 625 635,u583 605 612 618 652,u589 590 620 622 632,u598 577 590 612 622,u604 560 572 590 592,u610 548 552 572 575,d619 537 547 557 560,u625 527 532 545 547,d634 512 547 580 582,u640 570 575 607 607,u649 571 584,u670 570 577 578 595,u676 510 545 570 570,u685 543 550 553 555,d691 557 670,d697 670 683 733 748,u706 698 712 725 730,d712 710 727 775 777,u721 762 790,u727 738 748 765 765,d733 728 733 745 747,u742 715 728 733 745,u751 717 728 733 735,d757 712 715 728 745,u763 725 745,u772 697 700 712 715,u778 590 593 700 700,u784 457 470 577 590,u793 345 350 457 487,u799 333 343,d820 278,d829 278 310 342 342,u835 280 342,u845 340,u860 280,d866 275 335 340 340,d873 275 335 340 340,d880 275 335 340 340,u886 277 335,u895 217,u902 155,u908 160,u915 163,d925 162,u932 162,u937 100 163,d946 38 100,d952 98 280,u962 341,u968 340 342 344 405,u994 217 334,u1003 95 212,d1009 155 217,u1018 157,d1024 95 155,u1040 154 217,d1045 212 217,u1060 220,u1070 281,d1081 283 343,d1090 403 466,u1096 403 465,d1105 403 433 523 523,d1111 463 525,u1118 525 525 525 557,d1126 527 586,u1132 587 647,u1141 580,u1177 640,u1183 523 581,u1198 517,d1213 516,u1219 455 515,u1227 517,d1234 517 577,d1238 577 577 577 640,d1244 577 607 640 640,u1249 577 577 577 640,d1270 577 582 612 640,u1280 577 640 640 640,u1291 608 640 645 647,d1300 580 645 703 703,u1306 703 703 703 767,u1314 703 765 765 765,u1321 703 765 767 767,d1330 703 703 707 765,u1342 703 767,u1350 702,u1357 640 703,u1372 640 703`],
[1400, 480, 3, 3, `u598 640,u607 350 455 640 640,d613 422 445 485 515,u621 387 455 475 500,d628 422 445 480 540,u634 420 493 495 530,d643 432 480 495 518,u649 400 425 500 518,u658 325 360 418 420,u664 295 330 372 380,u673 202 215 342 372,u679 125 145 240 240,d685 65 145 285 285`],
[1540, 180, 3, 3, `u274 545 778 1183 1183,d280 730 785 1083 1180,u289 875 878 1083 1183,u295 730 800 873 985,d301 705 795 840 855,u310 655 760 855 918,u316 412 477 748 750,d325 447 478 710 765,u331 600 600 680 830,d340 522 600 672 675,u346 543 580 672 775,u352 325 337 587 590,u361 190 213 325 345,d367 45 208 215 270,d376 190 225 457 460,d382 438 448 843 848,d388 793 847 868 887`]
];
const drawCandles = () => BLOCKS.map(([ox, oy, sx, sy, list]) => list.split(',').map(s => {
  const up = s[0] === 'u', v = s.slice(1).split(' ').map(Number);
  const x = Math.floor(ox + v[0] / sx), y = v.slice(1).map(n => Math.round(oy + n / sy));
  const dark = up ? '#075982' : '#b02a2a', light = up ? '#1592c8' : '#fa7272';
  if (y.length === 1) return `<rect x="${x - 1}" y="${y[0]}" width="3" height="1" fill="${dark}"/>`;
  const [hi, top, bot, lo] = y.length === 2 ? [y[0], y[0], y[1], y[1]] : y;
  const h = Math.max(1, bot - top);
  let out = `<rect x="${x - 1}" y="${top}" width="3" height="${h}" fill="${dark}"/>`;
  if (lo > hi) out = `<rect x="${x}" y="${hi}" width="1" height="${lo - hi}" fill="${dark}"/>` + out;
  if (h > 2) out += `<rect x="${x}" y="${top + 1}" width="1" height="${h - 2}" fill="${light}"/>`;
  return out;
}).join('')).join('');

const L = (x, y, color, w, dash) => `<line x1="${x}" x2="100%" y1="${y}" y2="${y}" stroke="${color}" stroke-width="${w}"${dash ? ` stroke-dasharray="${dash}"` : ''}/>`;
const GREEN = '#3f9e3f', RED = '#c01818';
const level = {
  red: (x, y) => L(x, y, RED, 2, '21 9'), thick: (x, y) => L(x, y, '#3aa53a', 2, '21 9'),
  thin: (x, y) => L(x, y, GREEN, 1, '20 8'), dots: (x, y) => L(x, y, GREEN, 1, '4 4'),
  edge: (x, y) => L(x, y, '#000', 1), mid: (x, y) => L(x, y, '#1212a8', 1, '12 12')
};
const GROUPS = [
  [1, 912, [['red', 202, '7 274,9'], ['edge', 215.5, '7 273,9'], ['mid', 232.5, '7 272,5'], ['edge', 249.5, '7 271,2'], ['thick', 262, '7 270,2'], ['thin', 275.5, '7 269,1'], ['dots', 282.5, '7 268,5'], ['dots', 295.5, '7 267,5']]],
  [592, 1207, [['red', 296, '7 267,4'], ['edge', 315.5, '7 265,9'], ['mid', 339.5, '7 263,9'], ['edge', 364.5, '7 261,9'], ['thick', 383, '7 260,4'], ['thin', 403.5, '7 258,8'], ['dots', 414.5, '7 257,9'], ['dots', 433.5, '7 256,4']]],
  [1102, 1462, [['dots', 755.5, '7 230,5'], ['dots', 788.5, '7 227,8'], ['thin', 806.5, '7 226,3'], ['thick', 842, '7 223,5'], ['edge', 875.5, '7 220,8'], ['mid', 918.5, '7 217,3'], ['edge', 962.5, '7 213,8'], ['red', 995, '7 211,1']]]
];
define('price-plot', `
:host{display:block;position:relative;overflow:hidden;border-left:1px solid #7c8f9a;border-right:1px solid #6f8794;border-bottom:1px solid #6f8794}
svg{display:block;width:100%;height:100%;font:11px "Liberation Sans",sans-serif}
.day{position:absolute;left:0;top:0;padding:0 2px;border:solid #6f8794;border-width:0 1px 1px 0;background:#fff;line-height:15px}
.src{position:absolute;left:2px;bottom:0}
.tag{position:absolute;left:0;display:flex;height:18px;line-height:16px;white-space:pre}
.tag>*{border:1px solid #9aa8b0;background:linear-gradient(#fff,#e9eef0);padding:0 3px;margin-right:-1px}
.tag .r{background:linear-gradient(#f9b4b4,#f47a7a);border-color:#c23c3c;font-weight:700;padding:0 3px}
.tag .g{background:linear-gradient(#9df29d,#62e462);border-color:#229a22;padding:0 2px}
.tag .h{background:#2fc42f;border-color:#229a22;padding:0;display:flex;align-items:center}
.tag button{display:flex;align-items:center;border-radius:0 3px 3px 0}
.tag .v{color:#118511}`,
`<svg role="img" aria-label="Cours France 40 Cash"><g transform="translate(-1 -151)">
<rect x="1" y="215" width="100%" height="34" fill="#ffdded"/><rect x="592" y="315" width="100%" height="49" fill="#ffdded"/><rect x="1102" y="875" width="100%" height="87" fill="#cdecff"/>
<g shape-rendering="crispEdges">${drawCandles()}</g>
${GROUPS.map(g => g[2].map(l => `<text x="${g[1]}" y="${Math.round(l[1] - 5)}">${l[2]}</text>`).join('')).join('')}
<text x="11" y="466">Clo M</text>
<g text-anchor="end"><text x="100%" dx="-4" y="571">9h 7 244,9</text><text x="100%" dx="-4" y="764">Clo 17h 7 229,4</text><text x="100%" dx="-4" y="790">15h 7 227,3</text></g>
${GROUPS.map(g => g[2].map(l => level[l[0]](g[0], l[1])).join('')).join('')}
<path d="M592.5 315v50M1102.5 875v88" stroke="#000"/>
${L(1, 469.5, '#000', 1, '4 4')}${L(1, 575, '#4db6ee', 2)}${L(1, 768, '#641f96', 2)}${L(1, 794, '#59b3e4', 2)}
<path d="M1 338.5H1657M1 736.5H1657" stroke="#858585"/>${L(1657, 338, '#0a0ad8', 2)}${L(1657, 736.5, '#1c5c2a', 1, '4 4')}
<path d="M216.5 342V733" stroke="#000" stroke-width="1" stroke-dasharray="4 4"/>
<circle cx="216.5" cy="338.5" r="3" fill="#ffc24a" stroke="#e79a1c"/><circle cx="216.5" cy="736.5" r="3" fill="#ffc24a" stroke="#e79a1c"/>
</g></svg>
<div class="day">Jour :+Haut 7 275,5 +Bas 7 230,4</div><div class="src">IT-Finance.com - Temps Réel</div>
<div class="tag" style="top:169px"><span class="r">-4 @ 7 264,0</span><button aria-label="Fermer">${icon('cross', 11)}</button></div>
<div class="tag" style="top:187px"><b class="v">10,0</b><b class="v">40,00 €</b></div>
<div class="tag" style="top:567px"><span class="h">${icon('updown', 13)}</span><span class="g">A:LMT  4 @ 7 232,0</span><span class="v">128,00 €</span><button aria-label="Annuler">${icon('cross', 11)}</button></div>`);

const PRICES = Array.from({length: 14}, (_, i) => 7280 - 5 * i);
define('price-axis', `
:host{display:block;position:relative;overflow:hidden;border-top:1px solid #6f8794;grid-area:1/2/3/3}
svg{display:block;width:100%;height:100%;font:11px "Liberation Sans",sans-serif}
div{position:absolute;left:3px;border:1px solid #7c8f9a;white-space:pre;padding:0 2px}
.a{top:336px;height:14px;line-height:12px;background:#eef6f1;width:40px}
.b{top:310px;height:20px;width:64px;background:linear-gradient(#fbe23a,#eeb80c);font-size:16px;line-height:18px}
.b sup{font-size:11px;line-height:8px}
.c{top:330px;height:15px;line-height:14px;padding:0 1px;background:#98e79a;border-color:#98e79a;width:36px}`,
`<svg aria-hidden="true">${PRICES.map((p, i) => { const y = i * 62 + 6; return `<rect y="${y}" width="4" height="1" fill="#6f8794"/>` + (p === 7255 ? '' : `<text x="5" y="${y + 4}"${p === 7250 ? ' font-weight="700" font-size="12"' : ''}>${String(p).replace('7', '7 ')}</text>`); }).join('')}</svg>
<div class="a">7 253,5</div><div class="b">7 253,<sup>5</sup></div><div class="c">2m06s</div>`);

define('time-axis', `:host{display:block}svg{display:block;width:100%;height:100%;font:11px "Liberation Sans",sans-serif}`,
`<svg aria-hidden="true"><g text-anchor="middle">${Array.from({length: 32}, (_, i) => { const x = 8 + 58 * i; return `<rect x="${x}" y="0" width="1" height="3" fill="#6f8794"/>` + (i ? `<text x="${x}" y="13">${String((2 * i + 1) % 24).padStart(2, '0')}:00</text>` : ''); }).join('')}
<g font-weight="700" font-size="12"><text x="675" y="13">21</text><text x="1370" y="13">22</text></g></g></svg>`);

/* ---------- bottom bar ---------- */
define('bottom-bar', `
:host{display:flex;height:22px;flex:none;background:#9ebbc7;border-top:1px solid #6f8794;align-items:stretch}
button{display:flex;align-items:center;justify-content:center}
.p{width:32px;border-right:1px solid #6f8794}.d{width:15px;border-right:1px solid #6f8794}.w{background:#fff;width:29px;border-right:1px solid #6f8794}
.sh{background:#1f8ad6;color:#fff;width:67px;gap:5px}
.i{width:25px}.m{width:15px;font-size:16px;color:#44545c;padding-bottom:3px}
.e{width:15px;border:1px solid #6f8794;border-radius:2px;background:#a9c6d2;margin:4px 0 2px}
.l{margin-left:2px}
.tr{flex:1;display:flex;margin:4px 0 2px;border:solid #7d99a6;border-width:1px 0;background:#98b5c1}
.tr i:first-child{flex:385}.tr b{flex:1069;background:linear-gradient(#b4d3df,#9fc1ce);border:solid #6f8794;border-width:0 1px}.tr i:last-child{flex:30}
.z{width:103px;display:flex;justify-content:space-between;padding-left:5px;align-items:center}
.z button{width:21px}`,
`<button class="p" aria-label="Dessin">${icon('pencilChart', 18)}</button><button class="d" aria-label="Menu">${icon('caret', 7)}</button>
<button class="w" aria-label="Indicateurs">${icon('wave', 19)}</button><button class="d" style="background:#fff" aria-label="Menu">${icon('caret', 7)}</button>
<button class="sh">${icon('share', 15)}Partager</button>
${['chat', 'sheet', 'book', 'windows2', 'candleWrench'].map(n => `<button class="i" aria-label="${n}">${icon(n, 18)}</button>`).join('')}
<button class="m">«</button><button class="e l" aria-label="Gauche"><ui-icon name="caret" size="7" style="transform:rotate(90deg)"></ui-icon></button>
<div class="tr"><i></i><b></b><i></i></div><button class="e" aria-label="Droite"><ui-icon name="caret" size="7" style="transform:rotate(-90deg)"></ui-icon></button>
<div class="z">${['zoomFit', 'zoomOut', 'zoomIn', 'dock'].map(n => `<button aria-label="${n}">${icon(n, 17)}</button>`).join('')}</div>`);

/* ---------- system task bar ---------- */
define('task-bar', `
:host{display:flex;height:37px;flex:none;background:#101010;border-bottom:1px solid #4a4a4a;overflow:hidden}
button{width:49px;display:flex;justify-content:center;align-items:center;padding-top:3px}
.on{background:#333;width:46px}
.clock{margin-left:auto;color:#fff;font:11px/18px "Open Sans",sans-serif;text-align:center;padding:1px 3px 0}
.clock span{display:block}`,
['win', 'tsearch', 'tasks', 'phone', 'printer', 'spotify', 'word', 'folder', 'calc', 'paint', 'diamond', 'chrome', 'candles'].map((n, i) => `<button class="${i === 12 ? 'on' : ''}" aria-label="${n}">${icon(n, [17, 22, 17][i] || 23)}</button>`).join('') +
`<div class="clock"><span>10:22</span><span>22/11/2023</span></div>`);

define('trading-app', `
:host{display:flex;flex-direction:column;height:100vh}
.info{display:flex;height:48px;flex:none;align-items:stretch}
.chart{flex:1;min-height:0;display:grid;grid-template:18px minmax(0,1fr) 17px/minmax(0,1fr) 55px}
time-axis{grid-area:3/1/4/3}`,
`<menu-bar></menu-bar><tool-bar></tool-bar><chart-title></chart-title>
<div class="info"><stats-row></stats-row><order-panel></order-panel></div>
<div class="chart"><legend-bar></legend-bar><price-axis></price-axis><price-plot></price-plot><time-axis></time-axis></div>
<bottom-bar></bottom-bar><task-bar></task-bar>`);
</script>
</body>
</html>
